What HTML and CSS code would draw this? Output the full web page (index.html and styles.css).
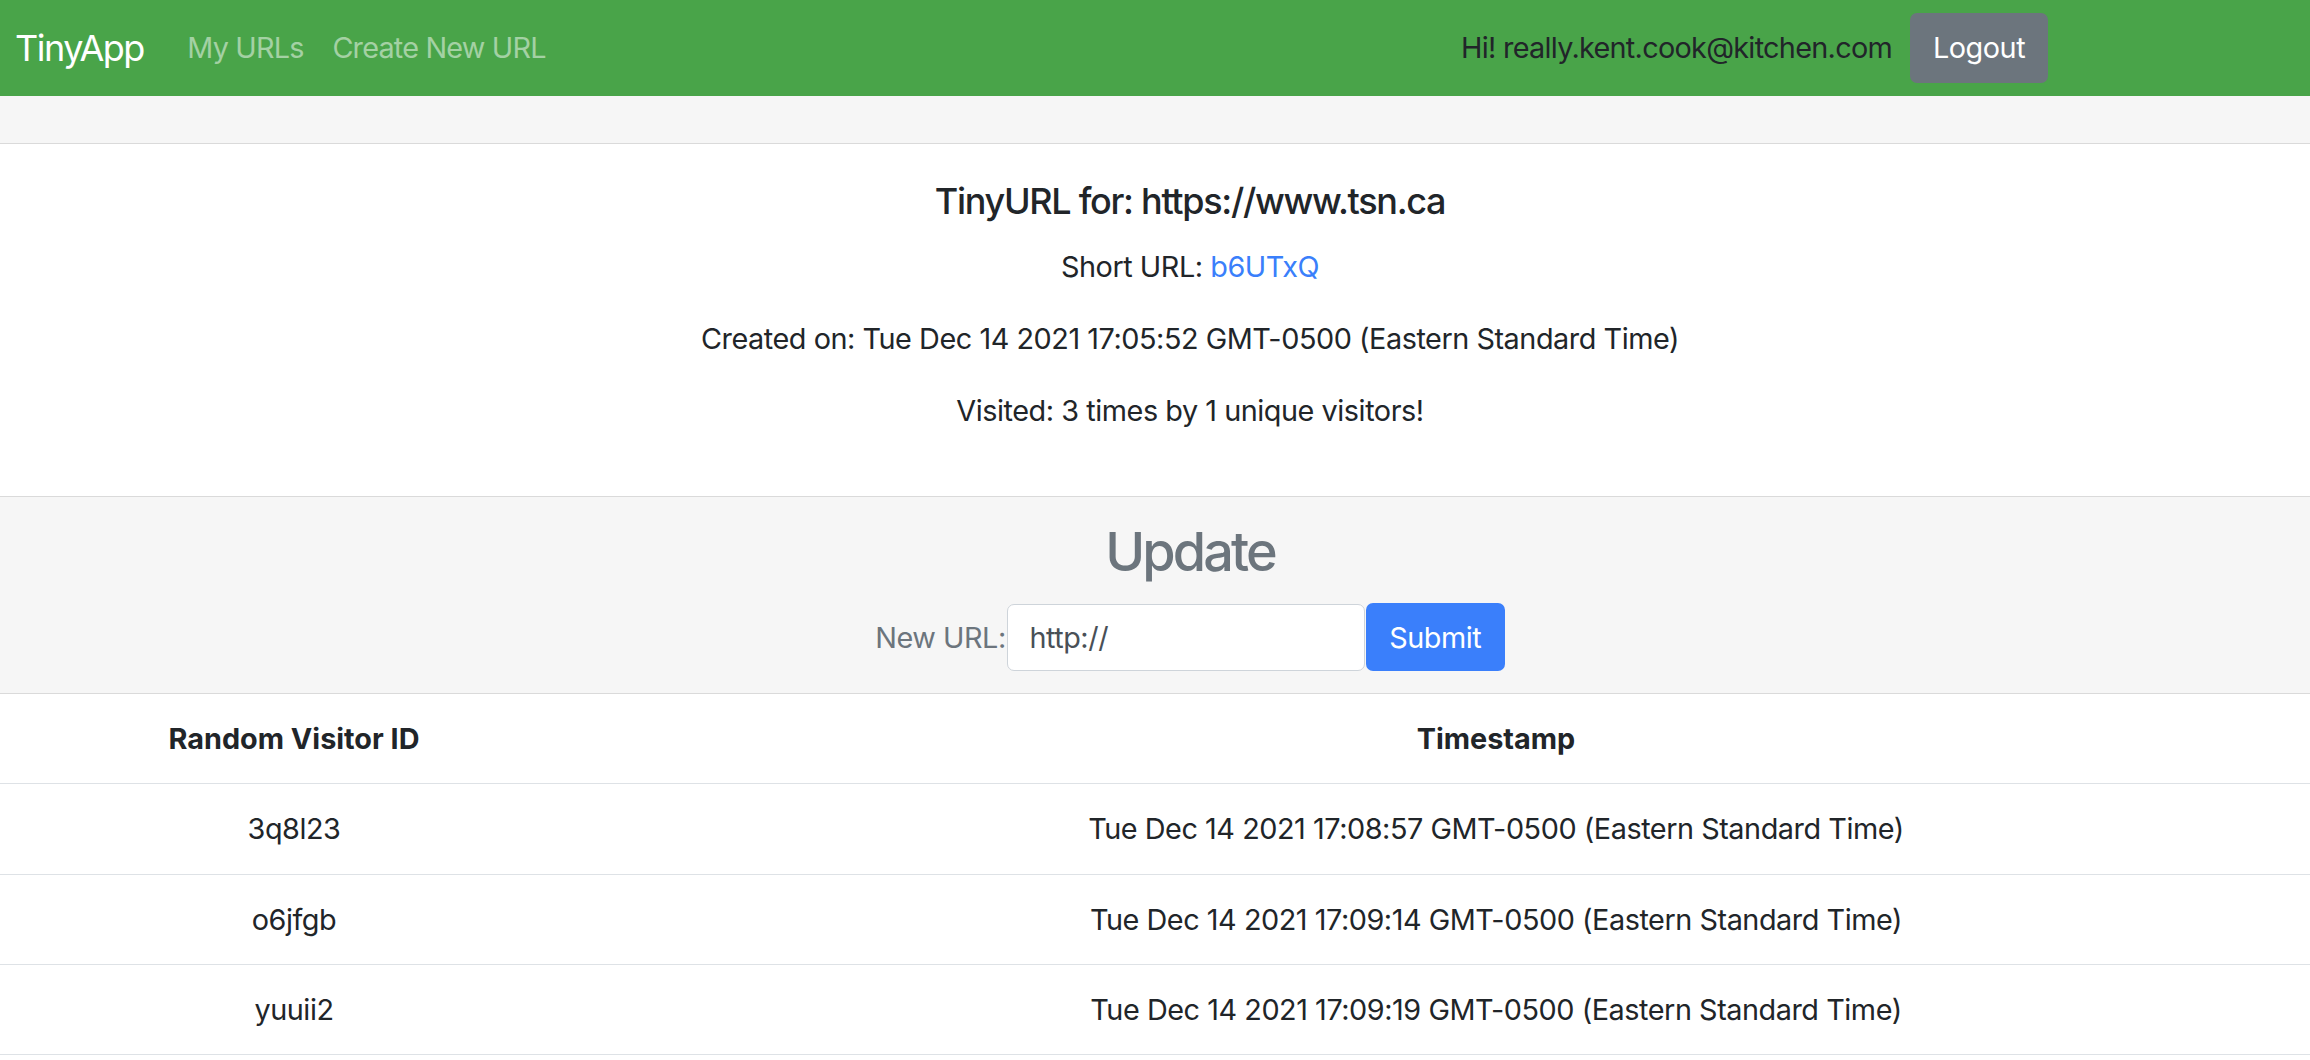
FILE: index.html
```html
<!DOCTYPE html>
<html lang="en">
<head>
<meta charset="utf-8">
<title>TinyApp</title>
<link rel="stylesheet" href="styles.css">
</head>
<body>
<nav class="navbar">
  <a class="brand" href="#">TinyApp</a>
  <a class="nav-link" href="#">My URLs</a>
  <a class="nav-link" href="#">Create New URL</a>
  <div class="user">
    <span class="greeting">Hi! really.kent.cook@kitchen.com</span>
    <button class="btn btn-logout">Logout</button>
  </div>
</nav>
<div class="band"></div>
<section class="info">
  <h5 class="title">TinyURL for: https://www.tsn.ca</h5>
  <p>Short URL: <a class="short" href="#">b6UTxQ</a></p>
  <p>Created on: Tue Dec 14 2021 17:05:52 GMT-0500 (Eastern Standard Time)</p>
  <p>Visited: 3 times by 1 unique visitors!</p>
</section>
<section class="update">
  <h2 class="update-title">Update</h2>
  <form class="update-form">
    <label class="label" for="newurl">New URL:</label>
    <input class="input" id="newurl" type="text" value="http://">
    <button class="btn btn-submit" type="button">Submit</button>
  </form>
</section>
<div class="table">
  <div class="row head">
    <div class="cell c1">Random Visitor ID</div>
    <div class="cell c2">Timestamp</div>
  </div>
  <div class="row">
    <div class="cell c1">3q8l23</div>
    <div class="cell c2">Tue Dec 14 2021 17:08:57 GMT-0500 (Eastern Standard Time)</div>
  </div>
  <div class="row">
    <div class="cell c1">o6jfgb</div>
    <div class="cell c2">Tue Dec 14 2021 17:09:14 GMT-0500 (Eastern Standard Time)</div>
  </div>
  <div class="row">
    <div class="cell c1">yuuii2</div>
    <div class="cell c2">Tue Dec 14 2021 17:09:19 GMT-0500 (Eastern Standard Time)</div>
  </div>
</div>
</body>
</html>
```
FILE: styles.css
```css
* { box-sizing: border-box; }
html, body { margin: 0; padding: 0; }
body {
  font-family: Inter, "Noto Sans", "Liberation Sans", sans-serif;
  font-size: 28.8px;
  line-height: 1.5;
  letter-spacing: -0.45px;
  color: #212529;
  background: #fff;
}
a { text-decoration: none; }

.navbar {
  height: 96px;
  background: #49a449;
  display: flex;
  align-items: center;
  padding-left: 15px;
}
.brand {
  color: #fff;
  font-size: 36px;
  letter-spacing: -1.5px;
  margin-right: 29px;
}
.nav-link {
  color: rgba(255, 255, 255, 0.5);
  letter-spacing: -0.8px;
  padding: 0 14.4px;
}
.user {
  margin-left: auto;
  margin-right: 262px;
  display: flex;
  align-items: center;
  gap: 18px;
}
.greeting { color: #212529; letter-spacing: -0.7px; }
.btn {
  font-family: inherit;
  font-size: 28.8px;
  line-height: 1.5;
  letter-spacing: -0.45px;
  border: none;
  border-radius: 7px;
  color: #fff;
  cursor: pointer;
}
.btn-logout {
  background: #6c757d;
  height: 70px;
  width: 138px;
}

.band {
  height: 48px;
  background: #f6f6f6;
  border-bottom: 1px solid #dadada;
}

.info {
  text-align: center;
  padding: 36px 0 35px 70px;
  border-bottom: 1px solid #dadada;
}
.title {
  font-size: 36px;
  font-weight: 500;
  line-height: 1.2;
  letter-spacing: -1.3px;
  margin: 0 0 22px;
}
.info p { margin: 0 0 28.8px; }
.short { color: #3a7ffb; }

.update {
  background: #f6f6f6;
  text-align: center;
  padding: 20px 0 22px 70px;
  border-bottom: 1px solid #dadada;
}
.update-title {
  font-size: 54px;
  font-weight: 500;
  line-height: 69px;
  letter-spacing: -2.9px;
  color: #6c757d;
  margin: 0 0 17px;
}
.update-form {
  display: flex;
  justify-content: center;
  align-items: center;
}
.label { color: #6c757d; margin-right: 1px; }
.input {
  width: 358px;
  height: 67px;
  border: 1px solid #ced4da;
  border-radius: 7px;
  padding: 0 21.6px;
  font-family: inherit;
  font-size: 28.8px;
  letter-spacing: -0.45px;
  color: #495057;
  background: #fff;
  margin-right: 1px;
}
.btn-submit {
  background: #3a7ffb;
  width: 139px;
  height: 68px;
}

.table { width: 100%; }
.row {
  display: grid;
  grid-template-columns: 588px 1fr;
  border-bottom: 1px solid #dee2e6;
}
.cell {
  text-align: center;
  padding: 23px 0;
  line-height: 43.2px;
}
.c2 { padding-left: 94px; }
.head .cell { font-weight: 700; letter-spacing: 0; }
```
